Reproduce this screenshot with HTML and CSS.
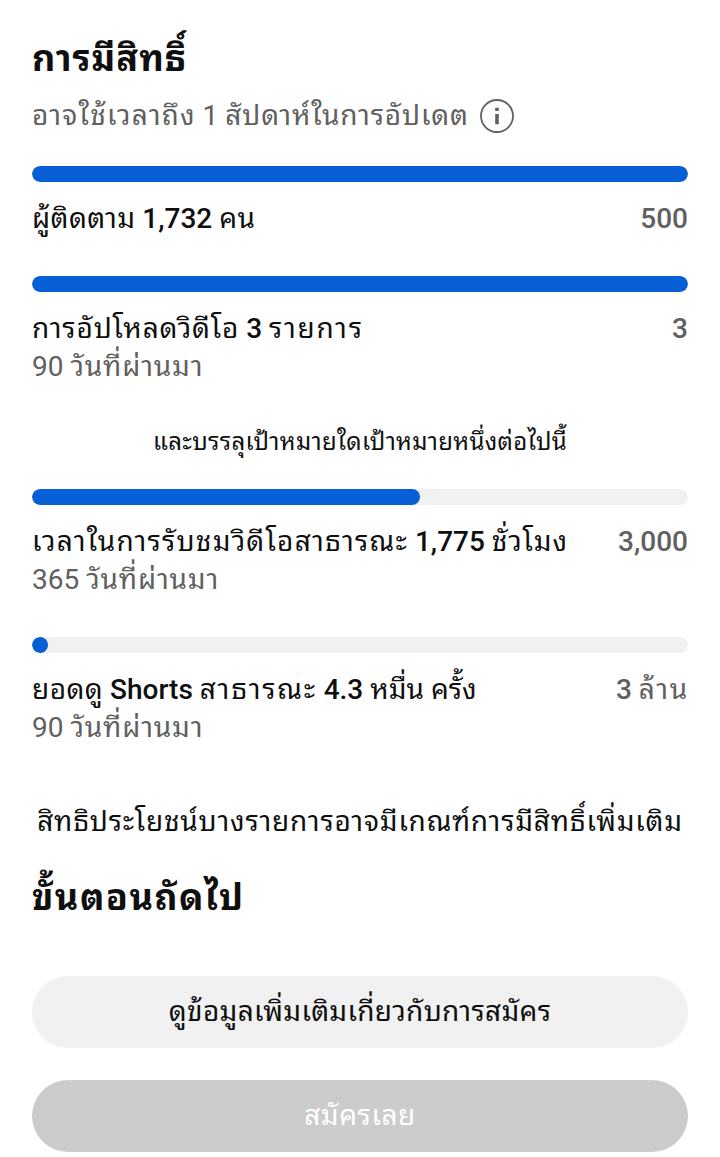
FILE: index.html
```html
<!DOCTYPE html>
<html lang="th">
<head>
    <meta charset="UTF-8">
    <meta name="viewport" content="width=device-width, initial-scale=1.0">
    <title>การมีสิทธิ์</title>
    <link rel="stylesheet" href="styles.css">
</head>
<body>
    <div class="container">
        <h2 class="heading">การมีสิทธิ์</h2>
        <div class="subtitle">
            <span><span class="th_wide">อาจใช้เวลาถึง</span> 1 <span class="th">สัปดาห์ในการอัปเดต</span></span>
            <svg class="info_icon" width="36" height="36" viewBox="0 0 36 36" fill="none">
                <circle cx="18" cy="18" r="16" stroke="#606060" stroke-width="1.8"/>
                <path d="M18 9.7v3.2M18 16v10.3" stroke="#606060" stroke-width="3.6"/>
            </svg>
        </div>

        <div class="goal goal_subs">
            <div class="bar"><div class="bar_fill" style="width: 100%"></div></div>
            <div class="goal_row">
                <span><span class="th_narrow">ผู้ติดตาม</span> <b>1,732</b> <span class="th_narrow">คน</span></span>
                <span class="target"><b>500</b></span>
            </div>
        </div>

        <div class="goal goal_uploads">
            <div class="bar"><div class="bar_fill" style="width: 100%"></div></div>
            <div class="goal_row">
                <span><span class="th">การอัปโหลดวิดีโอ</span> <b>3</b> <span class="th_wider">รายการ</span></span>
                <span class="target"><b>3</b></span>
            </div>
            <div class="period">90 <span class="th">วันที่ผ่านมา</span></div>
        </div>

        <p class="either">และบรรลุเป้าหมายใดเป้าหมายหนึ่งต่อไปนี้</p>

        <div class="goal goal_hours">
            <div class="bar"><div class="bar_fill" style="width: 59.17%"></div></div>
            <div class="goal_row">
                <span><span class="th_wide">เวลาในการรับชมวิดีโอสาธารณะ</span> <b>1,775</b> <span class="th">ชั่วโมง</span></span>
                <span class="target"><b>3,000</b></span>
            </div>
            <div class="period">365 <span class="th">วันที่ผ่านมา</span></div>
        </div>

        <div class="goal goal_shorts">
            <div class="bar"><div class="bar_fill" style="width: 1.43%"></div></div>
            <div class="goal_row">
                <span><span class="th_narrow">ยอดดู</span> <b>Shorts</b> <span class="th_wider">สาธารณะ</span> <b>4.3</b> หมื่น ครั้ง</span>
                <span class="target"><b>3</b> <span class="th_wider unit">ล้าน</span></span>
            </div>
            <div class="period">90 <span class="th">วันที่ผ่านมา</span></div>
        </div>

        <p class="note">สิทธิประโยชน์บางรายการอาจมีเกณฑ์การมีสิทธิ์เพิ่มเติม</p>
        <h2 class="heading next_head">ขั้นตอนถัดไป</h2>
        <button class="button button_more">ดูข้อมูลเพิ่มเติมเกี่ยวกับการสมัคร</button>
        <button class="button button_apply" disabled>สมัครเลย</button>
    </div>
</body>
</html>
```

FILE: styles.css
```css
body{
    margin: 0px;
    background-color: white;
    font-family: Roboto, "Noto Sans Thai Looped", "Noto Sans Thai", "Noto Sans", sans-serif;
    font-size: 28px;
    color: #0f0f0f;
}
b{
    font-weight: 500;
}
/* thai text is set a little looser than the numbers */
.th_narrow{
    letter-spacing: 0.45px;
}
.th{
    letter-spacing: 0.85px;
}
.th_wide{
    letter-spacing: 1.23px;
}
.th_wider{
    letter-spacing: 1.75px;
}
.unit{
    margin-right: -1px;
}
.container{
    display: flex;
    flex-direction: column;
    box-sizing: border-box;
    height: 1157px;
    overflow: hidden;
    padding: 33px 32px 0px;
}
.heading{
    margin: 0px;
    height: 52px;
    line-height: 52px;
    font-size: 36px;
    font-weight: 700;
    letter-spacing: 1px;
    white-space: nowrap;
}
.subtitle{
    display: flex;
    align-items: center;
    gap: 10px;
    height: 40px;
    margin-top: 11px;
    line-height: 40px;
    color: #606060;
    white-space: nowrap;
}
.info_icon{
    flex: none;
}
.goal{
    white-space: nowrap;
}
.goal_subs{
    height: 80px;
    margin-top: 30px;
}
.goal_uploads{
    height: 110px;
    margin-top: 30px;
}
.goal_hours,
.goal_shorts{
    height: 110px;
}
.goal_shorts{
    margin-top: 38px;
}
.bar{
    height: 16px;
    border-radius: 8px;
    background-color: #f1f1f1;
    overflow: hidden;
}
.bar_fill{
    height: 16px;
    min-width: 16px;
    border-radius: 8px;
    background-color: #065fd4;
}
.goal_row{
    display: flex;
    justify-content: space-between;
    height: 38px;
    margin-top: 18px;
    line-height: 38px;
}
.target,
.period{
    color: #606060;
}
.period{
    height: 38px;
    line-height: 38px;
}
.either{
    height: 38px;
    margin: 37px 0px 28px;
    line-height: 38px;
    font-size: 24px;
    letter-spacing: 0.33px;
    text-align: center;
    white-space: nowrap;
}
.note{
    height: 40px;
    margin: 55px 0px 0px;
    line-height: 40px;
    letter-spacing: 0.82px;
    text-align: center;
    white-space: nowrap;
}
.next_head{
    margin-top: 30px;
    letter-spacing: 1.5px;
}
.button{
    flex: none;
    height: 72px;
    padding: 0px 0px 8px;
    border: none;
    border-radius: 36px;
    font-family: inherit;
    font-size: 28px;
}
.button_more{
    margin-top: 52px;
    background-color: #f1f1f1;
    color: #0f0f0f;
    letter-spacing: 0.33px;
}
.button_apply{
    margin-top: 32px;
    background-color: #cccccc;
    color: white;
    letter-spacing: 0.6px;
}
```
